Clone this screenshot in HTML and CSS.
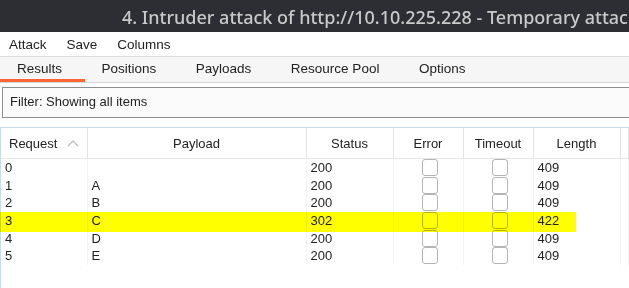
FILE: index.html
```html
<!DOCTYPE html>
<html lang="en">
<head>
    <meta charset="UTF-8">
    <meta name="viewport" content="width=device-width, initial-scale=1.0">
    <title>Intruder attack</title>
    <link rel="stylesheet" href="styles.css">
</head>
<body>
    <div class="titlebar">4. Intruder attack of http://10.10.225.228 - Temporary attack</div>

    <div class="menubar">
        <span class="menu-item">Attack</span>
        <span class="menu-item">Save</span>
        <span class="menu-item">Columns</span>
    </div>

    <div class="tabs">
        <span class="tab active">Results</span>
        <span class="tab">Positions</span>
        <span class="tab">Payloads</span>
        <span class="tab">Resource Pool</span>
        <span class="tab">Options</span>
    </div>

    <div class="filter">Filter: Showing all items</div>

    <div class="results">
        <table class="grid">
            <colgroup>
                <col class="c-request">
                <col class="c-payload">
                <col class="c-status">
                <col class="c-error">
                <col class="c-timeout">
                <col class="c-length">
                <col>
            </colgroup>
            <thead>
                <tr>
                    <th class="left">Request
                        <svg class="sort" width="12" height="8" viewBox="0 0 12 8"><polyline points="1,7 6,2 11,7" fill="none" stroke="#b9b9b9" stroke-width="1.2"/></svg>
                    </th>
                    <th>Payload</th>
                    <th>Status</th>
                    <th>Error</th>
                    <th>Timeout</th>
                    <th>Length</th>
                    <th></th>
                </tr>
            </thead>
            <tbody>
                <tr><td>0</td><td></td><td>200</td><td class="check"><span class="box"></span></td><td class="check"><span class="box"></span></td><td>409</td><td></td></tr>
                <tr><td>1</td><td>A</td><td>200</td><td class="check"><span class="box"></span></td><td class="check"><span class="box"></span></td><td>409</td><td></td></tr>
                <tr><td>2</td><td>B</td><td>200</td><td class="check"><span class="box"></span></td><td class="check"><span class="box"></span></td><td>409</td><td></td></tr>
                <tr><td>3</td><td>C</td><td>302</td><td class="check"><span class="box"></span></td><td class="check"><span class="box"></span></td><td>422</td><td></td></tr>
                <tr><td>4</td><td>D</td><td>200</td><td class="check"><span class="box"></span></td><td class="check"><span class="box"></span></td><td>409</td><td></td></tr>
                <tr><td>5</td><td>E</td><td>200</td><td class="check"><span class="box"></span></td><td class="check"><span class="box"></span></td><td>409</td><td></td></tr>
            </tbody>
        </table>
        <div class="highlight"></div>
    </div>
</body>
</html>
```

FILE: styles.css
```css
body {
    margin: 0;
    width: 629px;
    height: 288px;
    overflow: hidden;
    background: #fff;
    font-family: "Liberation Sans", Arial, sans-serif;
    font-size: 13px;
    color: #222;
}
.titlebar {
    height: 32px;
    line-height: 34px;
    padding-left: 122px;
    background-color: #2d2e34;
    color: #c9c9c9;
    font-family: "Noto Sans", sans-serif;
    font-size: 18px;
    font-weight: 500;
    white-space: nowrap;
    overflow: hidden;
}
.menubar {
    display: flex;
    height: 24px;
    align-items: center;
    background: #fff;
    border-bottom: 1px solid #dcdcdc;
    font-size: 13.5px;
}
.menu-item {
    padding: 0 10px 0 9px;
    margin-right: 1px;
}
.tabs {
    display: flex;
    height: 25px;
    background: #f6f6f6;
    border-bottom: 1px solid #d6d6d6;
    font-size: 13.5px;
}
.tab {
    padding: 0 22.5px 0 17px;
    line-height: 24px;
    border-bottom: 3px solid transparent;
    box-sizing: border-box;
    height: 25px;
}
.tab.active {
    border-bottom-color: #ff6633;
}
.filter {
    margin: 4px 0 0 2px;
    height: 29px;
    line-height: 28px;
    padding-left: 7px;
    border: 1px solid #8c8c8c;
    border-right: none;
    background: #fbfbfb;
}
.results {
    position: relative;
    margin-top: 9px;
    border-top: 1px solid #c8dbef;
    border-left: 1px solid #c8dbef;
    height: 170px;
}
.grid {
    width: 628px;
    table-layout: fixed;
    border-collapse: collapse;
}
.c-request { width: 86px; }
.c-payload { width: 219px; }
.c-status { width: 87px; }
.c-error { width: 70px; }
.c-timeout { width: 70px; }
.c-length { width: 87px; }
th {
    height: 30px;
    padding: 0;
    font-weight: normal;
    text-align: center;
    border-right: 1px solid #e3e3e3;
    border-bottom: 1px solid #e6e6e6;
    white-space: nowrap;
}
th.left {
    text-align: left;
    padding-left: 8px;
}
.sort {
    margin-left: 6px;
    vertical-align: 1px;
}
td {
    height: 17.6px;
    padding: 0 0 0 4px;
    line-height: 17px;
    border-right: 1px solid #f3f3f3;
    white-space: nowrap;
}
td.check {
    padding: 0;
    text-align: center;
}
.box {
    display: inline-block;
    width: 14px;
    height: 15px;
    margin-left: 4px;
    border: 1.5px solid #b4b4b4;
    border-radius: 3px;
    background: #fff;
    vertical-align: top;
}
.highlight {
    position: absolute;
    left: -1px;
    top: 84px;
    width: 576px;
    height: 20px;
    background: #ffff00;
    mix-blend-mode: multiply;
}
```
